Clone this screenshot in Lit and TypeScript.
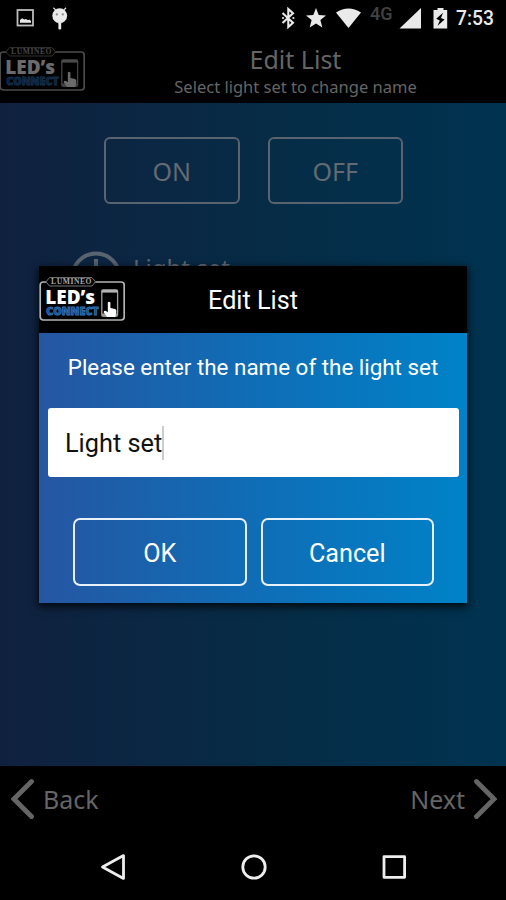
import { LitElement, html, css, svg } from "lit";
import { customElement } from "lit/decorators.js";

@customElement("brand-logo")
class BrandLogo extends LitElement {
  static styles = css`
    :host { display: block; width: 86px; height: 44px; }
    svg { display: block; }
    .name { font: 800 18.5px "Open Sans", sans-serif; fill: #fff; }
    .sub { font: 800 11px "Open Sans", sans-serif; fill: #1c4579; stroke: #2f74bd; stroke-width: .9px; }
    .brand { font: 700 7.6px "Liberation Serif", serif; fill: #a8a8a8; }
  `;
  render() {
    return html`<svg width="86" height="44" viewBox="0 0 86 44">
      <rect x="1.2" y="5" width="84" height="38" rx="3" fill="#000" stroke="#b4b4b4" stroke-width="1.7" />
      <path d="M10.5 .6H53L56.5 4.8L53 9H10.5L7 4.8Z" fill="#000" stroke="#777" stroke-width="1" />
      <text class="brand" x="12" y="7.4" textLength="40.5" lengthAdjust="spacing">LUMINEO</text>
      <text class="name" x="6.2" y="26.8" textLength="50" lengthAdjust="spacingAndGlyphs">LED’s</text>
      <text class="sub" x="7.2" y="38" textLength="52.5" lengthAdjust="spacingAndGlyphs">CONNECT</text>
      <rect x="62.8" y="12.8" width="15.8" height="26.5" rx="1.8" fill="#000" stroke="#a0a0a0" stroke-width="1.3" />
      <path d="M62.6 12.8H78.6V15.6H62.6Z" fill="#b4b4b4" />
      <path d="M62.6 36.4H78.6V39.4H62.6Z" fill="#999" />
      <path d="M68.8 25.6Q70.1 24 71.4 25.6V31L76.2 32Q77.8 32.8 77.4 35L76.2 40H68.2L64.6 35.3Q65 33.4 67 34L68.8 35.2Z" fill="#fff" />
    </svg>`;
  }
}

@customElement("status-bar")
class StatusBar extends LitElement {
  static styles = css`
    :host { display: flex; height: 36px; align-items: center; color: #eaeaea; fill: #eaeaea; font-family: Roboto, sans-serif; box-sizing: border-box; padding: 0 10px 0 16px; }
    svg { display: block; flex: none; }
    .droid { margin-left: 16px; }
    .gap { flex: 1; }
    .star { margin-left: 10px; }
    .wifi { margin-left: 10px; }
    .net { width: 25px; margin: 0 4px 8px 9px; color: #424242; font-size: 18px; line-height: 20px; font-weight: 500; }
    .batt { margin-left: 12px; }
    .time { margin-left: 8px; width: 40px; font-size: 19.3px; font-weight: 500; line-height: 24px; padding-top: 1px; white-space: nowrap; }
  `;
  render() {
    return html`
      <svg width="19" height="20" viewBox="0 0 19 20">
        <rect x="1.5" y="2" width="15.5" height="15.5" fill="none" stroke="#bcbcbc" stroke-width="1.8" />
        <path d="M4 14.8V12L6.2 10.2L8.2 11.4L10 11L12 12.2L13.4 11.6L15 13V14.8Z" />
      </svg>
      <svg class="droid" width="18" height="24" viewBox="0 0 18 24">
        <path d="M2.4 1.8L5 4.4M15 1.8L12.6 4.4" stroke="#dcdcdc" stroke-width="1.3" />
        <circle cx="8.7" cy="9.7" r="7.4" /><rect x="7.4" y="16" width="2.8" height="7.5" rx="1.2" />
        <circle cx="5.8" cy="8.4" r="1.1" fill="#888" /><circle cx="11.8" cy="8.4" r="1.1" fill="#888" />
      </svg>
      <span class="gap"></span>
      <svg width="15" height="22" viewBox="0 0 15 22">
        <path d="M1.5 6L12 15.7L7.3 20V2L12 6.3L1.5 16" fill="none" stroke="#eaeaea" stroke-width="2.1" />
        <circle cx="2" cy="11" r="1.1" /><circle cx="12.4" cy="11" r="1.1" />
      </svg>
      <svg class="star" width="20" height="20" viewBox="0 0 20 20"><path d="M10 0L12.7 7L20 7.4L14.4 12L16.3 19.4L10 15.4L3.7 19.4L5.6 12L0 7.4L7.3 7Z" /></svg>
      <svg class="wifi" width="25" height="20" viewBox="0 0 25 20"><path d="M0 4.4Q12.5 -3.6 25 4.4L12.5 20Z" /></svg>
      <span class="net">4G</span>
      <svg width="22" height="21" viewBox="0 0 22 21"><path d="M22 0V20.5H.5Z" /></svg>
      <svg class="batt" width="15" height="21" viewBox="0 0 15 21">
        <path d="M4.5 0H10.5V2H14.2V20.5H.5V2H4.5Z" /><path d="M10 4.8L3.2 10.8L6.8 12.4L4.6 17.8L11.6 11.4L8 10Z" fill="#000" />
      </svg>
      <span class="time">7:53</span>`;
  }
}

@customElement("name-dialog")
class NameDialog extends LitElement {
  static styles = css`
    :host { display: flex; flex-direction: column; width: 428px; height: 337px; font-family: Roboto, sans-serif; color: #fff;
      background: linear-gradient(90deg, #2656a2, #0f6db6 50%, #0082c8); box-shadow: 0 3px 8px 1px rgba(0,0,0,.75); }
    .head { height: 67px; background: #000; display: grid; grid-template-columns: 86px 1fr 86px; align-items: center; }
    .head brand-logo { margin-bottom: 1px; }
    .title { text-align: center; font-size: 25.2px; line-height: 30px; padding-top: 3px; }
    .msg { margin-top: 18px; height: 32px; line-height: 32px; font-size: 22.4px; text-align: center; white-space: nowrap; }
    .field { margin: 25px 8px 0 9px; height: 69px; background: #fff; border-radius: 3px; color: #111; font-size: 25.3px; display: flex; align-items: center; padding: 2px 0 0 17px; box-sizing: border-box; }
    .caret { width: 2px; height: 34px; background: #ccc; margin-bottom: 2px; }
    .row { display: flex; gap: 14px; margin: 41px 33px 0 34px; }
    .btn { flex: 1; height: 68px; box-sizing: border-box; border: 2px solid #e8f0fa; border-radius: 7px; display: flex; align-items: center; justify-content: center; font-size: 25.2px; padding-top: 2px; }
  `;
  render() {
    return html`
      <div class="head"><brand-logo></brand-logo><div class="title">Edit List</div></div>
      <div class="msg">Please enter the name of the light set</div>
      <div class="field"><span>Light set</span><span class="caret"></span></div>
      <div class="row"><div class="btn">OK</div><div class="btn">Cancel</div></div>`;
  }
}

@customElement("app-root")
class AppRoot extends LitElement {
  static styles = css`
    :host { display: flex; flex-direction: column; position: relative; width: 506px; height: 900px; overflow: hidden; background: #000; font-family: "Noto Sans", sans-serif; color: #656565; }
    .head { height: 67px; display: flex; }
    .head brand-logo { opacity: .42; margin: 11px 0 0 -1px; flex: none; }
    .titles { flex: 1; text-align: center; white-space: nowrap; }
    .t1 { font-size: 25px; line-height: 34px; margin-top: 6px; }
    .t2 { font-size: 16.5px; line-height: 24px; margin-top: -1px; }
    .body { height: 663px; box-sizing: border-box; padding-top: 34px; color: #646a72; background: linear-gradient(90deg, #10213f, #062c46 55%, #003350); }
    .row { display: flex; gap: 28px; margin-left: 104px; }
    .btn { width: 135.5px; height: 67px; box-sizing: border-box; border: 2px solid #596470; border-radius: 6px; display: flex; align-items: center; justify-content: center; font-size: 25px; padding-top: 1px; }
    .item { display: flex; margin: 46px 0 0 71px; gap: 12px; }
    .label { font-size: 24px; line-height: 32px; padding-top: 2px; }
    .foot { height: 66px; display: flex; justify-content: space-between; align-items: center; padding: 0 9px 0 11px; font-size: 25px; box-sizing: border-box; }
    .step { display: flex; align-items: center; gap: 8px; line-height: 34px; }
    .nav { height: 68px; display: flex; justify-content: space-between; align-items: center; padding: 1px 98px 0 99px; box-sizing: border-box; }
    svg { display: block; }
    .modal { position: absolute; left: 39px; top: 266px; }
  `;
  chevron(d: string) {
    return html`<svg width="24" height="42" viewBox="0 0 24 42"><path d=${d} fill="none" stroke="#656565" stroke-width="4.8" stroke-linecap="round" /></svg>`;
  }
  navIcon(shape: unknown) {
    return html`<svg width="28" height="28" viewBox="0 0 28 28" fill="none" stroke="#eee" stroke-width="2.8" stroke-linejoin="round">${shape}</svg>`;
  }
  render() {
    return html`
      <status-bar></status-bar>
      <div class="head">
        <brand-logo></brand-logo>
        <div class="titles"><div class="t1">Edit List</div><div class="t2">Select light set to change name</div></div>
      </div>
      <div class="body">
        <div class="row"><div class="btn">ON</div><div class="btn">OFF</div></div>
        <div class="item">
          <svg width="50" height="50" viewBox="0 0 50 50" fill="none" stroke="#596470" stroke-width="4"><circle cx="25" cy="27" r="23.5" /><path d="M25 9V27" /></svg>
          <div class="label">Light set</div>
        </div>
      </div>
      <div class="foot">
        <div class="step">${this.chevron("M20.5 3.5L3 21L20.5 38.5")}<span>Back</span></div>
        <div class="step"><span>Next</span>${this.chevron("M3.5 3.5L21 21L3.5 38.5")}</div>
      </div>
      <div class="nav">
        ${this.navIcon(svg`<path d="M3.5 14L24.5 2.6V25.4Z" />`)}
        ${this.navIcon(svg`<circle cx="14" cy="14" r="11.2" />`)}
        ${this.navIcon(svg`<rect x="4" y="3.7" width="20.6" height="20.6" />`)}
      </div>
      <name-dialog class="modal"></name-dialog>`;
  }
}
